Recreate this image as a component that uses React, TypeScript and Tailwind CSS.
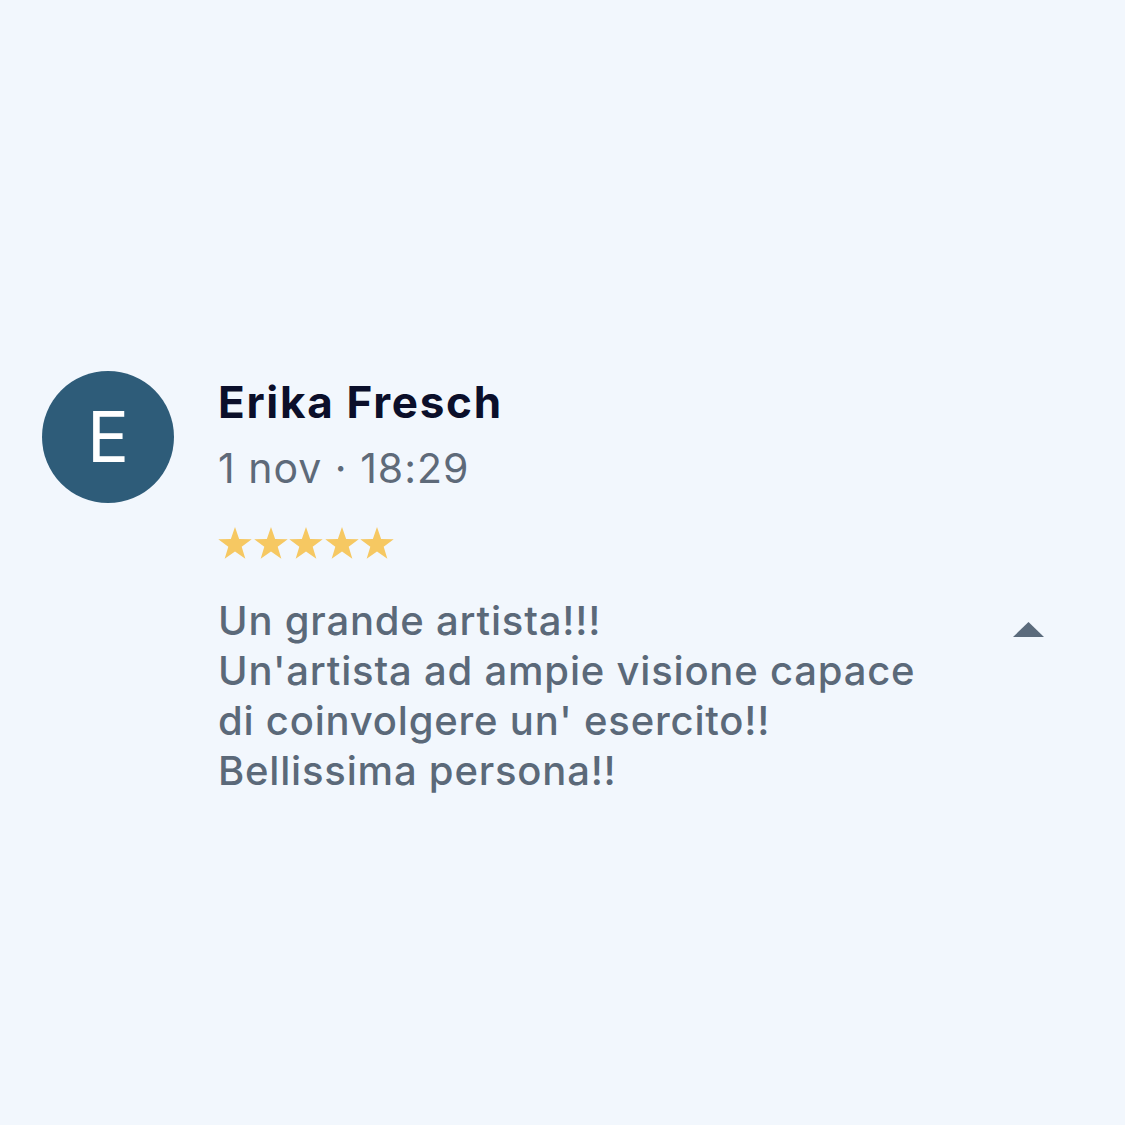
const Star = () => (
  <svg width="34" height="32" viewBox="2.4 2 19.2 18.2">
    <polygon
      points="12,2 14.35,8.76 21.51,8.91 15.8,13.24 17.88,20.09 12,16 6.12,20.09 8.2,13.24 2.49,8.91 9.65,8.76"
      fill="#f6c862"
    />
  </svg>
);

export default function App() {
  return (
    <div
      className="w-[1125px] h-[1125px] bg-[#f2f7fd] pt-[371px]"
      style={{ fontFamily: 'Inter, "Noto Sans", sans-serif' }}
    >
      <div className="flex items-start pl-[42px] pr-[81px]">
        {/* Avatar */}
        <div className="w-[132px] h-[132px] shrink-0 rounded-full bg-[#2e5c79] flex items-center justify-center">
          <span className="text-white text-[70px] font-normal leading-none">E</span>
        </div>

        <div className="ml-[44px] flex-1 flex flex-col">
          <p className="text-[#0b0f2a] text-[44px] font-bold leading-[52px] mt-[5px] tracking-[1.7px]">
            Erika Fresch
          </p>
          <p className="text-[#5e6a79] text-[41px] leading-[50px] mt-[15px] tracking-[1px]">
            1 nov · 18:29
          </p>

          <div className="flex gap-[1.5px] mt-[34px]">
            <Star />
            <Star />
            <Star />
            <Star />
            <Star />
          </div>

          <div className="flex items-start justify-between mt-[37px]">
            <p className="text-[#5b6979] text-[40px] font-medium leading-[50px] tracking-[0.8px]">
              Un grande artista!!!
              <br />
              Un'artista ad ampie visione capace
              <br />
              di coinvolgere un' esercito!!
              <br />
              Bellissima persona!!
            </p>
            <svg width="31" height="15" viewBox="0 0 31 15" className="mt-[26px]">
              <path d="M0 15 L15.5 0 L31 15 Z" fill="#5b6b7c" />
            </svg>
          </div>
        </div>
      </div>
    </div>
  );
}
